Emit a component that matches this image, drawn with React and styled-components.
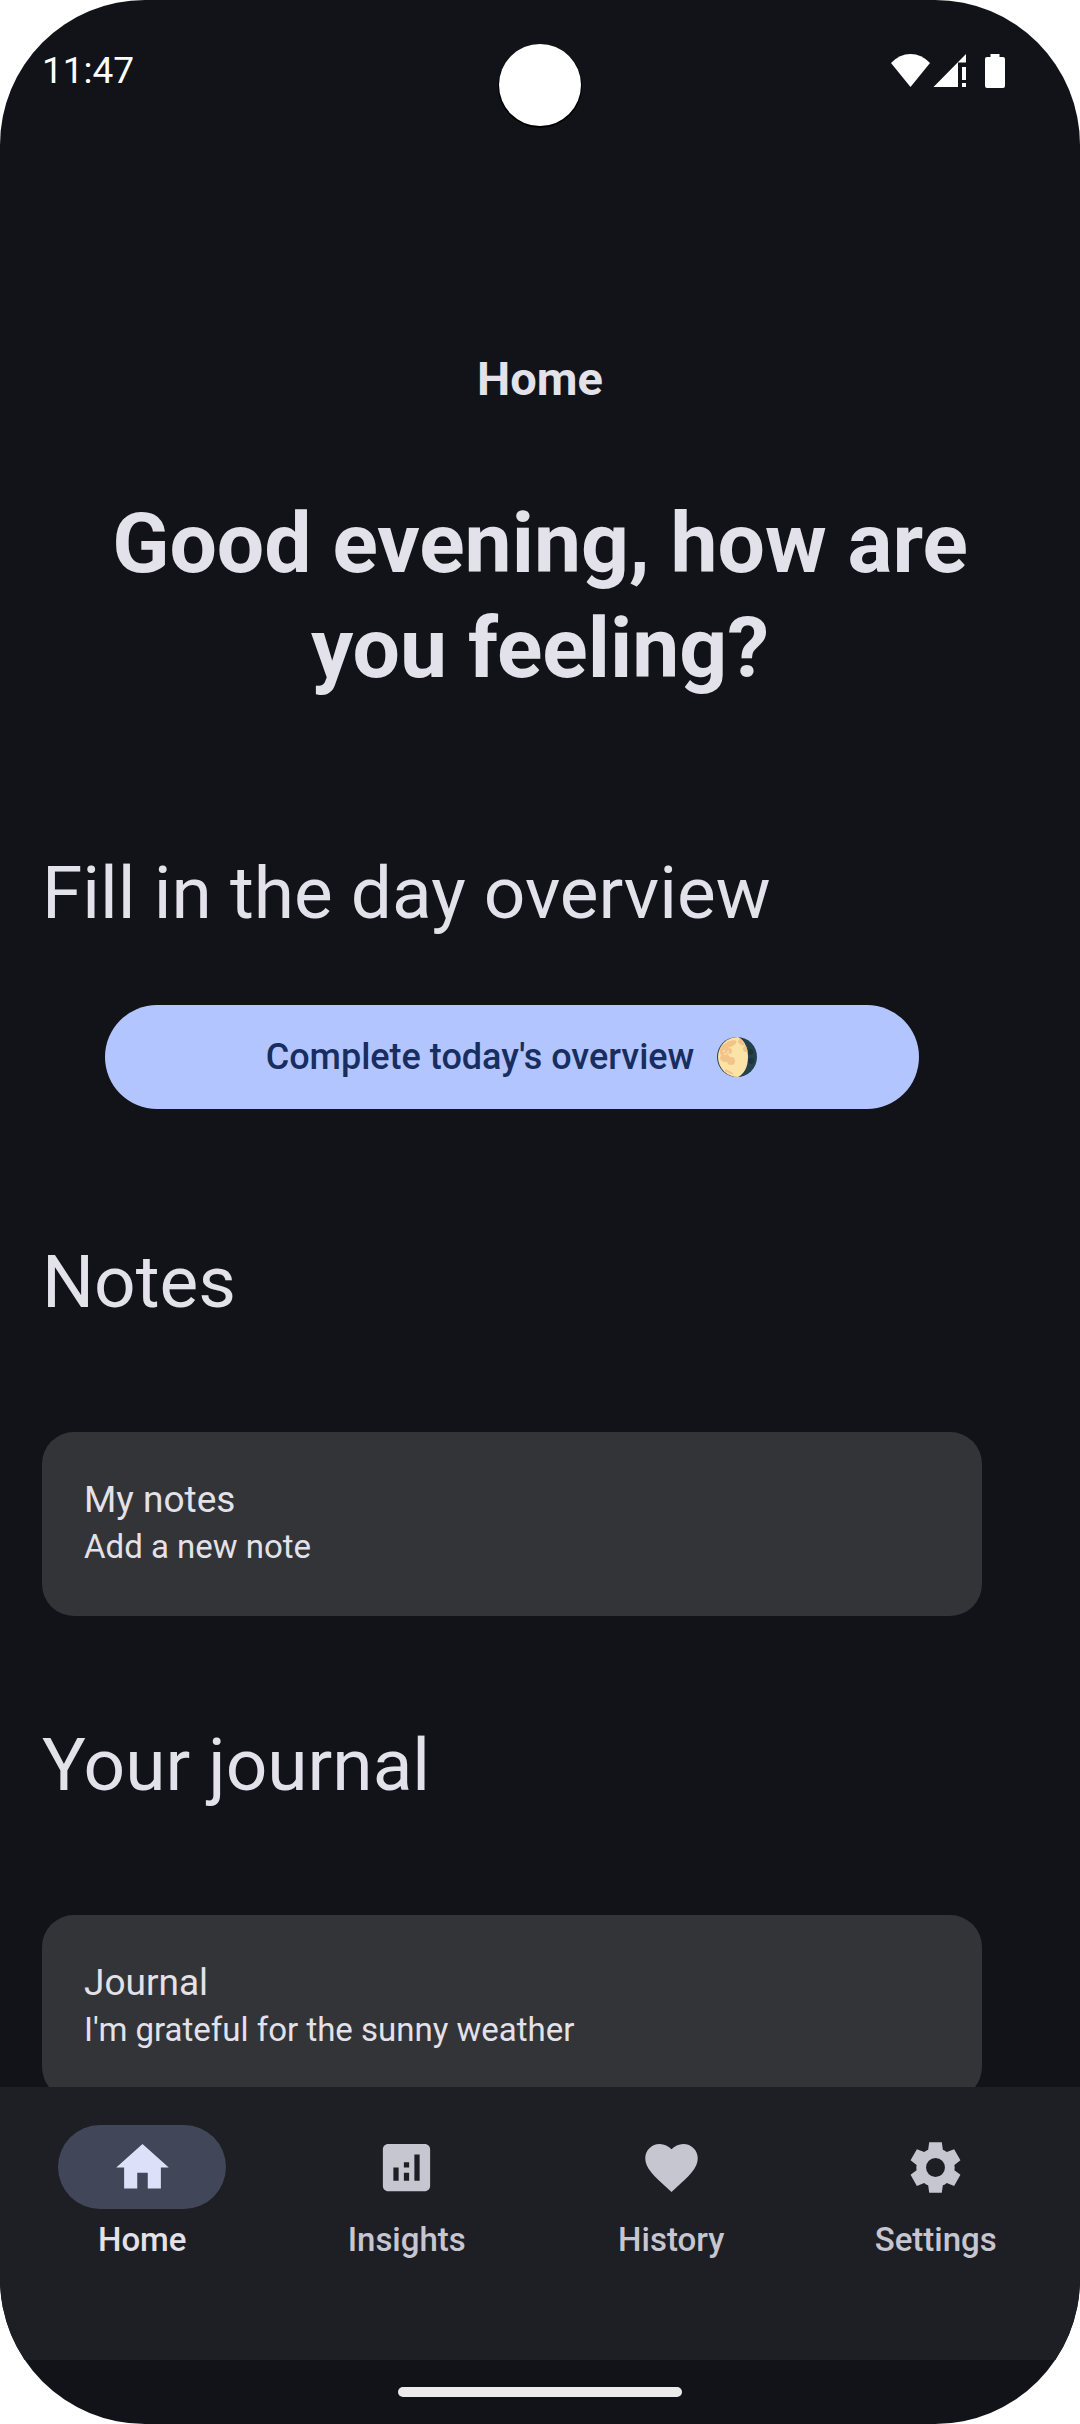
import React from "react";
import styled, { createGlobalStyle } from "styled-components";

const GlobalStyle = createGlobalStyle`
  *, *::before, *::after { box-sizing: border-box; }
  body { margin: 0; background: #ffffff; }
`;

const Screen = styled.div`
  position: relative;
  display: flex;
  flex-direction: column;
  height: 100vh;
  overflow: hidden;
  border-radius: 145px;
  background: #121318;
  color: #e3e1e9;
  font-family: Roboto, "Noto Sans", sans-serif;
`;

const StatusBar = styled.header`
  display: flex;
  align-items: center;
  justify-content: space-between;
  flex: none;
  height: 142px;
  padding: 0 74px 0 42px;
  color: #ffffff;
  font-size: 37px;
  line-height: 44px;
`;

const StatusIcons = styled.div`
  display: flex;
  align-items: center;
`;

const Camera = styled.div`
  position: absolute;
  top: 44px;
  left: 50%;
  width: 82px;
  height: 82px;
  margin-left: -41px;
  border-radius: 50%;
  background: #ffffff;
  box-shadow: 0 1px 0 1px #000000;
`;

const Content = styled.main`
  flex: 1;
  min-height: 0;
  overflow-y: auto;
  scrollbar-width: none;
  padding: 205px 42px 0;
`;

const PageTitle = styled.h1`
  margin: 0 0 81px;
  font-size: 47px;
  line-height: 63px;
  font-weight: 700;
  text-align: center;
`;

const Greeting = styled.p`
  margin: 0 0 145px;
  padding: 0 42px;
  font-size: 84px;
  line-height: 105px;
  font-weight: 700;
  text-align: center;
`;

const Section = styled.section`
  display: flex;
  flex-direction: column;
  margin: 0 56px ${(p) => p.$after}px 0;
`;

const SectionTitle = styled.h2`
  margin: 0 0 ${(p) => p.$gap}px;
  font-size: 73px;
  line-height: 94px;
  font-weight: 400;
`;

const OverviewButton = styled.button`
  display: flex;
  align-items: center;
  justify-content: center;
  gap: 22px;
  height: 104px;
  margin: 0 63px;
  padding: 0 42px;
  border: 0;
  border-radius: 52px;
  background: #b3c5ff;
  color: #182e60;
  font: 500 36px/52px Roboto, "Noto Sans", sans-serif;
`;

const Card = styled.button`
  display: flex;
  flex-direction: column;
  width: 100%;
  height: 184px;
  padding: 42px;
  border: 0;
  border-radius: 32px;
  background: #333438;
  color: #e3e1e9;
  font-family: inherit;
  text-align: left;
`;

const CardTitle = styled.span`
  font-size: 37px;
  line-height: 52px;
`;

const CardText = styled.span`
  font-size: 33px;
  line-height: 42px;
`;

const NavBar = styled.nav`
  display: flex;
  flex: none;
  height: 273px;
  padding: 38px 12px 0 10px;
  background: #1e1f25;
`;

const NavItem = styled.a`
  display: flex;
  flex: 1;
  flex-direction: column;
  align-items: center;
  gap: 10px;
  color: ${(p) => (p.$active ? "#e3e1e9" : "#c6c6d0")};
  font-size: 33px;
  line-height: 42px;
  font-weight: 500;
  text-decoration: none;
`;

const Pill = styled.span`
  display: flex;
  align-items: center;
  justify-content: center;
  width: 168px;
  height: 84px;
  border-radius: 42px;
  background: ${(p) => (p.$active ? "#424659" : "transparent")};
  color: ${(p) => (p.$active ? "#dce1f9" : "#c6c6d0")};
`;

const GestureArea = styled.footer`
  display: flex;
  flex: none;
  align-items: center;
  justify-content: center;
  height: 64px;
`;

const GestureHandle = styled.div`
  width: 284px;
  height: 10px;
  border-radius: 5px;
  background: #ececec;
`;

const icons = {
  home: "M10 20v-6h4v6h5v-8h3L12 3 2 12h3v8z",
  insights:
    "M19 3H5c-1.1 0-2 .9-2 2v14c0 1.1.9 2 2 2h14c1.1 0 2-.9 2-2V5c0-1.1-.9-2-2-2zM9 17H7v-5h2v5zm4 0h-2v-3h2v3zm0-5h-2v-2h2v2zm4 5h-2V7h2v10z",
  history:
    "M12 21.35l-1.45-1.32C5.4 15.36 2 12.28 2 8.5 2 5.42 4.42 3 7.5 3c1.74 0 3.41.81 4.5 2.09C13.09 3.81 14.76 3 16.5 3 19.58 3 22 5.42 22 8.5c0 3.78-3.4 6.86-8.55 11.54L12 21.35z",
  settings:
    "M9.6 2.4h4.8l.4 2.8q.8.3 1.5.9l2.8-1.1 2.4 4.2-2.3 1.8q.2 1 0 2l2.3 1.8-2.4 4.2-2.8-1.1q-.7.6-1.500.9l-.4 2.8H9.600l-.4-2.800q-.8-.3-1.500-.9L4.900 19l-2.400-4.200 2.300-1.800q-.2-1 0-2L2.500 9.200 4.900 5l2.800 1.100q.7-.6 1.500-.9zM12 8.400a3.600 3.600 0 1 0 0 7.200 3.600 3.600 0 0 0 0-7.200z",
};

const Icon = ({ name }) => (
  <svg width="63" height="63" viewBox="0 0 24 24" fill="currentColor" fillRule="evenodd" aria-hidden="true">
    <path d={icons[name]} />
  </svg>
);

const StatusGlyphs = () => (
  <svg width="115" height="34" viewBox="0 0 115 34" fill="#ffffff" aria-hidden="true">
    <path d="M0 9Q8.500 0 19.500 0T39 9L19.500 33z" />
    <path d="M42.500 33L75 0V8.500H67V33zM71 13h4v13h-4zM71 29h4v4h-4z" />
    <path d="M99.500 0h9v3h3.500a2 2 0 0 1 2 2v27a2 2 0 0 1-2 2h-16a2 2 0 0 1-2-2V5a2 2 0 0 1 2-2h3.500z" />
  </svg>
);

const Moon = () => (
  <svg width="42" height="42" viewBox="0 0 42 42" role="img" aria-label="Waning gibbous moon">
    <clipPath id="lit">
      <path d="M22 1A20 20 0 1 0 22 41C28 38 32 31 32 21S28 4 22 1z" />
    </clipPath>
    <circle cx="21" cy="21" r="20" fill="#23424b" />
    <g fill="#1b353e">
      <circle cx="34" cy="16" r="3" />
      <circle cx="35" cy="25" r="3" />
    </g>
    <g clipPath="url(#lit)">
      <rect width="42" height="42" fill="#fbe2a6" />
      <g fill="#f3c48a">
        <ellipse cx="14" cy="8" rx="7" ry="3" transform="rotate(-22 14 8)" />
        <ellipse cx="8" cy="14" rx="4" ry="6" transform="rotate(20 8 14)" />
        <circle cx="13" cy="15" r="3" />
        <ellipse cx="9" cy="22" rx="5" ry="4" />
        <circle cx="15" cy="25" r="4" />
        <ellipse cx="26" cy="6" rx="4" ry="3" transform="rotate(30 26 6)" />
        <circle cx="30" cy="13" r="3" />
        <ellipse cx="13" cy="36" rx="5" ry="1" transform="rotate(25 13 36)" />
      </g>
      <g fill="#fbe2a6">
        <circle cx="8" cy="15" r="1" />
        <circle cx="12" cy="16" r="1" />
        <circle cx="9" cy="18" r="1" />
      </g>
    </g>
  </svg>
);

const navItems = [
  { name: "home", label: "Home" },
  { name: "insights", label: "Insights" },
  { name: "history", label: "History" },
  { name: "settings", label: "Settings" },
];

export default function App() {
  return (
    <>
      <GlobalStyle />
      <Screen>
        <StatusBar>
          <time>11:47</time>
          <StatusIcons>
            <StatusGlyphs />
          </StatusIcons>
          <Camera />
        </StatusBar>
        <Content>
          <PageTitle>Home</PageTitle>
          <Greeting>Good evening, how are you feeling?</Greeting>
          <Section $after={126}>
            <SectionTitle $gap={65}>Fill in the day overview</SectionTitle>
            <OverviewButton type="button">
              Complete today's overview
              <Moon />
            </OverviewButton>
          </Section>
          <Section $after={102}>
            <SectionTitle $gap={103}>Notes</SectionTitle>
            <Card type="button">
              <CardTitle>My notes</CardTitle>
              <CardText>Add a new note</CardText>
            </Card>
          </Section>
          <Section $after={102}>
            <SectionTitle $gap={103}>Your journal</SectionTitle>
            <Card type="button">
              <CardTitle>Journal</CardTitle>
              <CardText>I'm grateful for the sunny weather</CardText>
            </Card>
          </Section>
        </Content>
        <NavBar aria-label="Main">
          {navItems.map(({ name, label }, i) => (
            <NavItem key={name} href={`#${name}`} $active={i === 0} aria-current={i === 0 ? "page" : undefined}>
              <Pill $active={i === 0}>
                <Icon name={name} />
              </Pill>
              {label}
            </NavItem>
          ))}
        </NavBar>
        <GestureArea>
          <GestureHandle />
        </GestureArea>
      </Screen>
    </>
  );
}
